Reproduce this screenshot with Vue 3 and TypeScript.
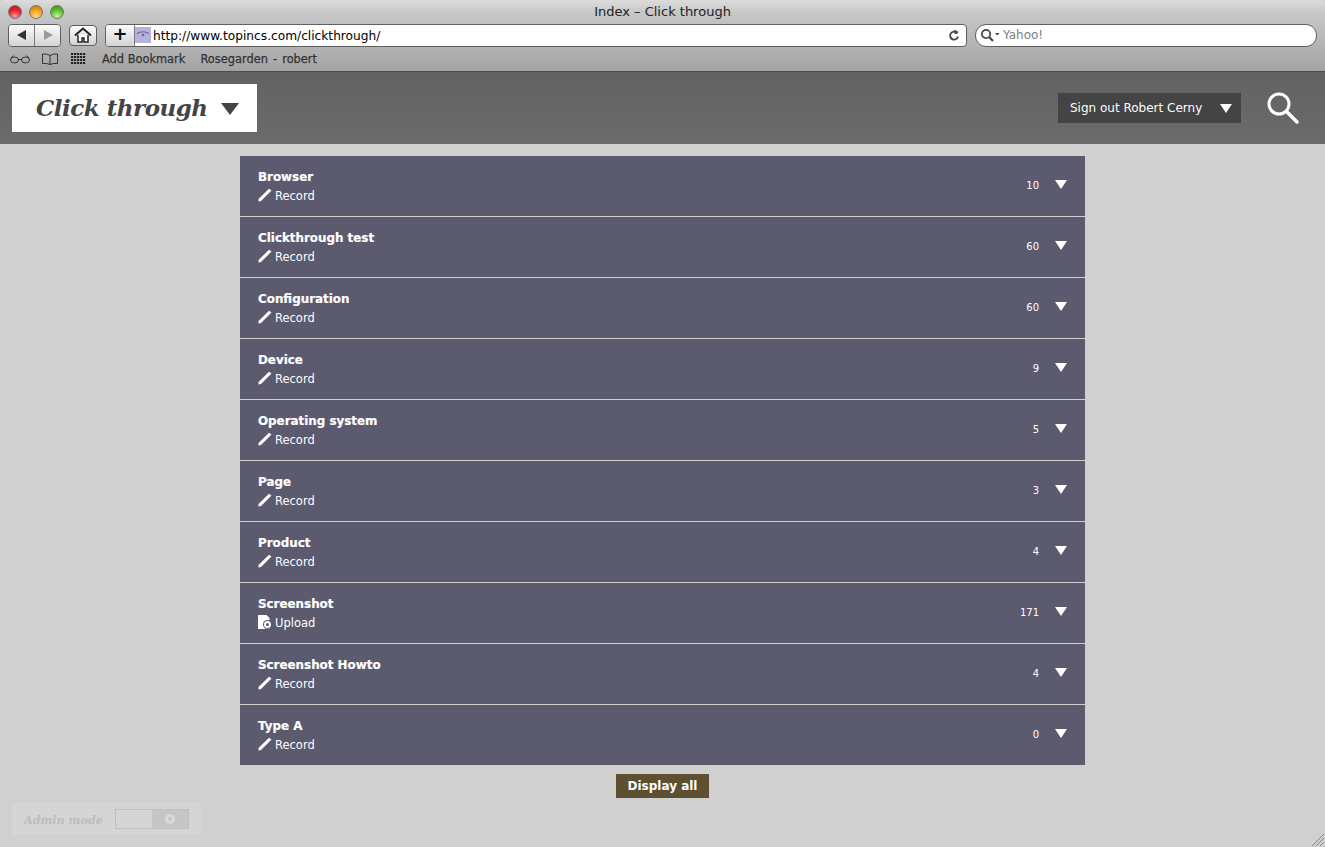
<template>
  <div class="window">
    <!-- browser chrome -->
    <div class="chrome">
      <div class="title-row">
        <div class="lights">
          <span class="light red" />
          <span class="light amber" />
          <span class="light green" />
        </div>
        <span class="win-title">Index – Click through</span>
      </div>
      <div class="tool-row">
        <div class="btn-group">
          <button class="tb-btn nav">
            <svg width="12" height="12" viewBox="0 0 12 12"><path d="M10 1v10L1 6z" fill="#333" /></svg>
          </button>
          <button class="tb-btn nav">
            <svg width="12" height="12" viewBox="0 0 12 12"><path d="M2 1v10l9-5z" fill="#9a9a9a" /></svg>
          </button>
        </div>
        <button class="tb-btn home">
          <svg width="18" height="16" viewBox="0 0 18 16">
            <path d="M1 8.500 9 1.500 17 8.500" fill="none" stroke="#222" stroke-width="2" />
            <path d="M4 8V15h4v-4h2v4h4V8" fill="#fff" stroke="#222" stroke-width="1.500" />
          </svg>
        </button>
        <div class="address">
          <button class="plus">+</button>
          <span class="favicon">
            <svg width="16" height="16" viewBox="0 0 16 16">
              <path d="M2 6.500Q8 3 14 6.500" fill="none" stroke="#6a6790" stroke-width="1.200" />
              <circle cx="8" cy="8" r="1.300" fill="#6a6790" />
            </svg>
          </span>
          <span class="url">http://www.topincs.com/clickthrough/</span>
          <svg class="reload" width="12" height="13" viewBox="0 0 12 13">
            <path d="M9.500 4.500A4 4 0 1 0 10 7.500" fill="none" stroke="#444" stroke-width="1.800" />
            <path d="M6.500 0.500v5l4-2.500z" fill="#444" />
          </svg>
        </div>
        <div class="search-box">
          <svg width="20" height="14" viewBox="0 0 20 14">
            <circle cx="6" cy="6" r="4.200" fill="none" stroke="#444" stroke-width="1.700" />
            <path d="M9 9 13 13" stroke="#444" stroke-width="2.200" />
            <path d="M15 5h4.500l-2.250 2.500z" fill="#444" />
          </svg>
          <span>Yahoo!</span>
        </div>
      </div>
      <div class="bookmarks">
        <svg class="bm-icon glasses" width="20" height="10" viewBox="0 0 20 10">
          <ellipse cx="4.500" cy="6" rx="4" ry="3" fill="none" stroke="#333" />
          <ellipse cx="15.500" cy="6" rx="4" ry="3" fill="none" stroke="#333" />
          <path d="M8 5.500h4M1 4.500 3.500 1.500M19 4.500 16.500 1.500" fill="none" stroke="#333" />
        </svg>
        <svg class="bm-icon" width="18" height="12" viewBox="0 0 18 12">
          <path d="M9 2.500Q6 .5 1.500 1v9.500Q6 10 9 11.500 12 10 16.500 10.500V1Q12 .5 9 2.500zM9 2.500v9" fill="none" stroke="#333" />
        </svg>
        <svg class="bm-icon grid" width="15" height="11" viewBox="0 0 15 11">
          <path d="M0 1h15M0 4h15M0 7h15M0 10h15" stroke="#222" stroke-width="2" stroke-dasharray="2.200 .8" />
        </svg>
        <span class="bm-link first">Add Bookmark</span>
        <span class="bm-link rose">Rosegarden - robert</span>
      </div>
    </div>

    <!-- page header -->
    <header class="page-head">
      <div class="app-menu">
        <span class="app-title">Click through</span>
        <span class="tri tri-dark" />
      </div>
      <div class="head-right">
        <div class="signout">
          <span>Sign out Robert Cerny</span>
          <span class="tri tri-white" />
        </div>
        <svg class="big-search" width="34" height="34" viewBox="0 0 34 34">
          <circle cx="13" cy="13" r="10" fill="none" stroke="#fff" stroke-width="3" />
          <path d="M20.500 20.500 31 31" stroke="#fff" stroke-width="3.500" stroke-linecap="round" />
        </svg>
      </div>
    </header>

    <main class="content">
      <ul class="type-list">
        <li v-for="row in rows" :key="row.name" class="type-row">
          <div class="row-main">
            <div class="row-name">{{ row.name }}</div>
            <div class="row-action">
              <svg v-if="row.action === 'Record'" class="action-icon" width="14" height="14" viewBox="0 0 14 14">
                <path d="M0.500 13.500 0.500 11 11 0.800 13.500 2.500 3 13z" fill="#fff" />
              </svg>
              <svg v-else class="action-icon" width="14" height="14" viewBox="0 0 14 14">
                <path d="M0 0h8.500l3 3v11H0z" fill="#fff" />
                <circle cx="9.500" cy="9.500" r="4.500" fill="#5c5a6f" />
                <circle cx="9.500" cy="9.500" r="2.500" fill="none" stroke="#fff" stroke-width="2" />
              </svg>
              <span>{{ row.action }}</span>
            </div>
          </div>
          <span class="row-count">{{ row.count }}</span>
          <span class="tri tri-row" />
        </li>
      </ul>
      <button class="display-all">Display all</button>
    </main>

    <div class="admin">
      <span class="admin-label">Admin mode</span>
      <div class="toggle">
        <span class="toggle-off" />
        <span class="toggle-on"><i class="toggle-dot" /></span>
      </div>
    </div>

    <svg class="grip" width="12" height="12" viewBox="0 0 12 12">
      <path d="M12 0 0 12M12 4 4 12M12 8 8 12" stroke="#888" stroke-width="1" />
    </svg>
  </div>
</template>

<script setup lang="ts">
interface TypeRow {
  name: string
  action: 'Record' | 'Upload'
  count: number
}

const rows: TypeRow[] = [
  { name: 'Browser', action: 'Record', count: 10 },
  { name: 'Clickthrough test', action: 'Record', count: 60 },
  { name: 'Configuration', action: 'Record', count: 60 },
  { name: 'Device', action: 'Record', count: 9 },
  { name: 'Operating system', action: 'Record', count: 5 },
  { name: 'Page', action: 'Record', count: 3 },
  { name: 'Product', action: 'Record', count: 4 },
  { name: 'Screenshot', action: 'Upload', count: 171 },
  { name: 'Screenshot Howto', action: 'Record', count: 4 },
  { name: 'Type A', action: 'Record', count: 0 },
]
</script>

<style>
html,
body {
  margin: 0;
  background: #d0d0d0;
}
</style>

<style scoped>
.window {
  position: relative;
  height: 847px;
  overflow: hidden;
  background: #d0d0d0;
  font-family: "DejaVu Sans", Verdana, sans-serif;
}

/* ===== browser chrome ===== */
.chrome {
  height: 72px;
  box-sizing: border-box;
  background: linear-gradient(#dcdcdc 0, #c8c8c8 12px, #a4a4a4 100%);
  border-bottom: 1px solid #4e4e4e;
  border-radius: 5px 5px 0 0;
}

.title-row {
  position: relative;
  height: 23px;
  display: flex;
  align-items: center;
  justify-content: center;
}

.lights {
  position: absolute;
  left: 8px;
  top: 5px;
  display: flex;
  gap: 7px;
}

.light {
  width: 14px;
  height: 14px;
  border-radius: 50%;
  border: 0.5px solid #777;
  box-sizing: border-box;
}

.red {
  background: radial-gradient(circle at 50% 85%, #ff9a9a, #e8202c 55%, #b01420);
}

.amber {
  background: radial-gradient(circle at 50% 85%, #ffe08a, #f59a14 55%, #c0700c);
}

.green {
  background: radial-gradient(circle at 50% 85%, #c4f59c, #5cbc2c 55%, #2f8a18);
}

.win-title {
  font-size: 13px;
  color: #222;
}

.tool-row {
  height: 24px;
  display: flex;
  align-items: center;
  padding: 0 8px;
}

.btn-group {
  display: flex;
  width: 51px;
  height: 21px;
  border: 1px solid #5f5f5f;
  border-radius: 4px;
  overflow: hidden;
  margin-right: 8px;
}

.tb-btn {
  margin: 0;
  padding: 0;
  border: none;
  background: linear-gradient(#fbfbfb, #d4d4d4);
  display: flex;
  align-items: center;
  justify-content: center;
}

.nav {
  flex: 1;
}

.nav + .nav {
  border-left: 1px solid #7a7a7a;
}

.home {
  width: 28px;
  height: 21px;
  border: 1px solid #5f5f5f;
  border-radius: 4px;
  margin-right: 8px;
}

.address {
  width: 860px;
  height: 21px;
  box-sizing: content-box;
  display: flex;
  align-items: center;
  background: #fff;
  border: 1px solid #5f5f5f;
  border-radius: 4px;
  overflow: hidden;
  margin-right: 8px;
}

.plus {
  flex: 0 0 29px;
  height: 21px;
  margin: 0;
  padding: 0 0 2px;
  border: none;
  border-right: 1px solid #7a7a7a;
  background: linear-gradient(#fbfbfb, #d4d4d4);
  color: #111;
  font-family: "DejaVu Sans", sans-serif;
  font-size: 18px;
  font-weight: 700;
  line-height: 18px;
}

.favicon {
  width: 16px;
  height: 16px;
  background: #b5b3de;
  margin-right: 2px;
}

.favicon svg {
  display: block;
}

.url {
  flex: 1;
  padding-top: 2px;
  font-size: 12.200px;
  color: #000;
  white-space: nowrap;
}

.reload {
  margin-right: 6px;
}

.search-box {
  flex: 1;
  height: 21px;
  display: flex;
  align-items: center;
  gap: 3px;
  padding-left: 4px;
  background: #fff;
  border: 1px solid #5f5f5f;
  border-radius: 11px;
  font-size: 12px;
  color: #7d7d7d;
}

.bookmarks {
  height: 23px;
  display: flex;
  align-items: center;
  padding-left: 10px;
}

.bm-icon {
  margin-right: 12px;
}

.glasses {
  margin-right: 11px;
}

.grid {
  margin-right: 13px;
}

.bm-link {
  font-size: 11.400px;
  color: #333;
  margin-right: 15px;
  -webkit-text-stroke: 0.25px #333;
}

.bm-link.first {
  margin-left: 3px;
}

.rose {
  word-spacing: 1.500px;
}

/* ===== page header ===== */
.page-head {
  height: 72px;
  display: flex;
  align-items: center;
  justify-content: space-between;
  padding: 0 25px 0 12px;
  background: linear-gradient(#626262, #6b6b6b);
}

.app-menu {
  width: 245px;
  height: 48px;
  box-sizing: border-box;
  display: flex;
  align-items: center;
  padding-left: 24px;
  background: #fff;
}

.app-title {
  font-family: "DejaVu Serif", Georgia, serif;
  font-size: 23px;
  font-weight: 700;
  font-style: italic;
  letter-spacing: -0.5px;
  color: #444;
  white-space: nowrap;
  margin-top: -2px;
}

.tri {
  display: block;
  width: 0;
  height: 0;
  border-style: solid;
  border-color: transparent;
}

.tri-dark {
  margin-left: 13px;
  margin-top: 2px;
  border-width: 12px 9.500px 0;
  border-top-color: #444;
}

.head-right {
  display: flex;
  align-items: center;
}

.signout {
  width: 183px;
  height: 30px;
  box-sizing: border-box;
  display: flex;
  align-items: center;
  justify-content: space-between;
  padding: 0 9px 0 12px;
  background: #444;
  color: #fff;
  font-size: 12px;
}

.tri-white {
  border-width: 9px 6.500px 0;
  border-top-color: #fff;
}

.big-search {
  margin-left: 25px;
}

/* ===== list ===== */
.content {
  display: flex;
  flex-direction: column;
  align-items: center;
  padding-top: 12px;
}

.type-list {
  width: 845px;
  margin: 0;
  padding: 0;
  list-style: none;
}

.type-row {
  height: 60px;
  display: flex;
  align-items: center;
  padding: 0 18px;
  background: #5c5a6f;
  color: #fff;
}

.type-row + .type-row {
  margin-top: 1px;
}

.row-main {
  flex: 1;
  margin-top: -1px;
}

.row-name {
  font-size: 11.900px;
  line-height: 16px;
  font-weight: 700;
  -webkit-text-stroke: 0.2px #fff;
}

.row-action {
  display: flex;
  align-items: center;
  gap: 3px;
  margin-top: 4px;
  font-size: 11.500px;
  line-height: 14px;
}

.action-icon {
  margin-top: -2px;
}

.row-count {
  font-size: 10px;
  margin-top: -2px;
  margin-right: 16px;
}

.tri-row {
  margin-top: -4px;
  border-width: 9px 6.500px 0;
  border-top-color: #fff;
}

.display-all {
  width: 93px;
  height: 24px;
  margin: 9px 0 0;
  padding: 0;
  border: none;
  background: #5d4f30;
  color: #fff;
  font-family: "DejaVu Sans", Verdana, sans-serif;
  font-size: 12px;
  font-weight: 700;
}

/* ===== admin toggle, faded into the page ===== */
.admin {
  position: absolute;
  left: 12px;
  top: 803px;
  width: 189px;
  height: 32px;
  box-sizing: border-box;
  display: flex;
  align-items: center;
  padding: 1px 0 0 12px;
  background: #d5d5d5;
}

.admin-label {
  font-family: "DejaVu Serif", Georgia, serif;
  font-size: 11.200px;
  font-weight: 700;
  font-style: italic;
  color: #bcbcbc;
  white-space: nowrap;
}

.toggle {
  position: absolute;
  left: 103px;
  top: 6px;
  display: flex;
  width: 74px;
  height: 20px;
  box-sizing: border-box;
  border: 1px solid #bfbfbf;
}

.toggle-off {
  flex: 1;
}

.toggle-on {
  width: 36px;
  display: flex;
  align-items: center;
  justify-content: center;
  background: #c6c6c6;
}

.toggle-dot {
  width: 4px;
  height: 4px;
  border: 3px solid #dadada;
  border-radius: 50%;
}

.grip {
  position: absolute;
  right: 1px;
  bottom: 1px;
}
</style>
